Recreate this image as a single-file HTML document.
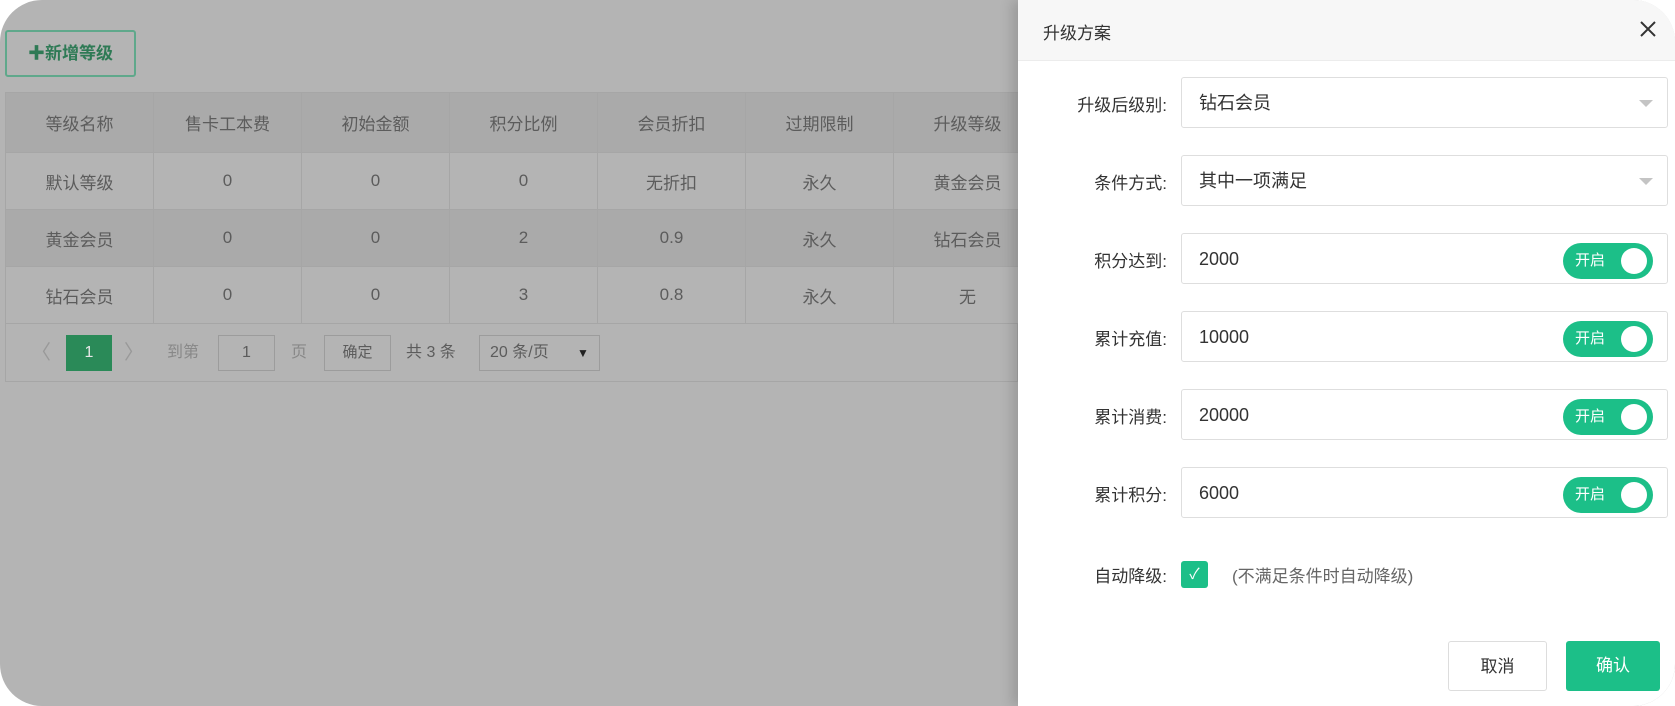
<!DOCTYPE html>
<html><head><meta charset="utf-8">
<style>
*{box-sizing:border-box;margin:0;padding:0}
body{width:1675px;height:706px;background:#fff;font-family:"Liberation Sans","Noto Sans CJK SC",sans-serif;overflow:hidden}
#wrap{position:absolute;left:0;top:0;width:1675px;height:706px;border-radius:42px;overflow:hidden;background:#b4b4b4}
.btn-add{position:absolute;left:5px;top:30px;width:131px;height:47px;border:2px solid #5fa88b;border-radius:3px;color:#2e7a55;font-size:17px;line-height:43px;text-align:center;font-weight:bold}
table{position:absolute;left:5px;top:92px;border-collapse:collapse;font-size:17px;color:#5c5c5c}
td{width:148px;text-align:center;border:1px solid #a6a6a6;height:57px}
tr.h td{background:#aaaaaa;height:60px}
tr.d td{background:#aaaaaa}
.pg{position:absolute;left:5px;top:323px;width:1013px;height:59px;border:1px solid #a6a6a6;border-top:none;font-size:16px;color:#5c5c5c}
.pg span{position:absolute;top:15px}
.box{position:absolute;border:1px solid #9c9c9c;height:36px;top:12px;line-height:34px;text-align:center}
#drawer{position:absolute;left:1018px;top:0;width:657px;height:706px;background:#fff;box-shadow:-6px 0 12px rgba(0,0,0,.15)}
.hd{height:61px;background:#f7f7f7;border-bottom:1px solid #ececec;position:relative}
.hd .t{position:absolute;left:25px;top:19px;font-size:17px;color:#333}
.hd svg{position:absolute;left:621px;top:20px}
.lab{position:absolute;width:149px;text-align:right;font-size:17px;color:#333}
.inp{position:absolute;left:163px;width:487px;height:51px;border:1px solid #dedede;border-radius:3px;font-size:18px;color:#333;padding-left:17px;line-height:51px}
.tri{position:absolute;right:14px;top:22px;width:0;height:0;border-left:7px solid transparent;border-right:7px solid transparent;border-top:7px solid #c4c4c4}
.tg{position:absolute;left:381px;top:9px;width:90px;height:36px;border-radius:18px;background:#1cbf88;color:#fff;font-size:15px;line-height:36px;padding-left:12px}
.tg i{position:absolute;right:6px;top:5px;width:26px;height:26px;border-radius:50%;background:#fff}
.b{position:absolute;top:641px;height:50px;border-radius:3px;font-size:17px;text-align:center;line-height:50px}
</style></head><body>
<div id="wrap">
<div class="btn-add">✚新增等级</div>
<table>
<tr class="h"><td>等级名称</td><td>售卡工本费</td><td>初始金额</td><td>积分比例</td><td>会员折扣</td><td>过期限制</td><td>升级等级</td></tr>
<tr><td>默认等级</td><td>0</td><td>0</td><td>0</td><td>无折扣</td><td>永久</td><td>黄金会员</td></tr>
<tr class="d"><td>黄金会员</td><td>0</td><td>0</td><td>2</td><td>0.9</td><td>永久</td><td>钻石会员</td></tr>
<tr><td>钻石会员</td><td>0</td><td>0</td><td>3</td><td>0.8</td><td>永久</td><td>无</td></tr>
</table>
<div class="pg">
<span style="left:25px;color:#999;font-size:20px;top:13px">〈</span>
<div class="box" style="left:60px;width:46px;background:#2a8a58;border-color:#2a8a58;color:#e8e8e8">1</div>
<span style="left:118px;color:#999;font-size:20px;top:13px">〉</span>
<span style="left:161px;color:#888">到第</span>
<div class="box" style="left:212px;width:57px">1</div>
<span style="left:285px;color:#888">页</span>
<div class="box" style="left:318px;width:67px;font-size:15px">确定</div>
<span style="left:400px">共 3 条</span>
<div class="box" style="left:473px;width:121px;text-align:left;padding-left:10px">20 条/页<span style="left:97px;top:0;font-size:12px;color:#222">▼</span></div>
</div>
<div id="drawer">
<div class="hd"><span class="t">升级方案</span><svg width="18" height="18" viewBox="0 0 18 18"><path d="M2 2L16 16M16 2L2 16" stroke="#333" stroke-width="2"/></svg></div>
<div class="lab" style="top:91px">升级后级别:</div>
<div class="inp" style="top:77px">钻石会员<span class="tri"></span></div>
<div class="lab" style="top:169px">条件方式:</div>
<div class="inp" style="top:155px">其中一项满足<span class="tri"></span></div>
<div class="lab" style="top:247px">积分达到:</div>
<div class="inp" style="top:233px">2000<span class="tg">开启<i></i></span></div>
<div class="lab" style="top:325px">累计充值:</div>
<div class="inp" style="top:311px">10000<span class="tg">开启<i></i></span></div>
<div class="lab" style="top:403px">累计消费:</div>
<div class="inp" style="top:389px">20000<span class="tg">开启<i></i></span></div>
<div class="lab" style="top:481px">累计积分:</div>
<div class="inp" style="top:467px">6000<span class="tg">开启<i></i></span></div>
<div class="lab" style="top:562px">自动降级:</div>
<div style="position:absolute;left:163px;top:561px;width:27px;height:27px;background:#1cbf88;border-radius:3px;color:#fff;font-size:15px;text-align:center;line-height:27px">✓</div>
<div style="position:absolute;left:214px;top:562px;font-size:17px;color:#666">(不满足条件时自动降级)</div>
<div class="b" style="left:430px;width:99px;border:1px solid #ddd;color:#333">取消</div>
<div class="b" style="left:548px;width:94px;background:#1cbf88;color:#fff">确认</div>
</div>
</div>
</body></html>
